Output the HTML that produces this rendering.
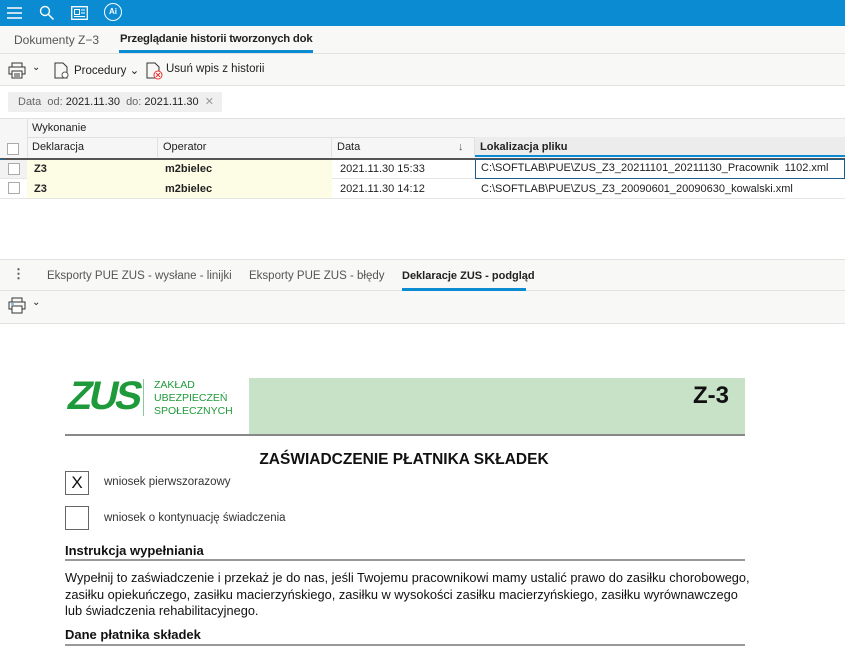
<!DOCTYPE html>
<html><head><meta charset="utf-8"><style>
*{box-sizing:border-box;margin:0;padding:0}
body{width:845px;height:650px;overflow:hidden;background:#fff;font-family:"Liberation Sans",sans-serif;color:#222;position:relative;font-size:12px}
.a{position:absolute}
.top{left:0;top:0;width:845px;height:26px;background:#0a8bd2}
.tabs{left:0;top:26px;width:845px;height:28px;background:#f8f8f7;border-bottom:1px solid #e2e2e2}
.tb{left:0;top:54px;width:845px;height:32px;background:#f8f8f7;border-bottom:1px solid #e2e2e2}
.gray{color:#555}
.cell{position:absolute;height:20px;line-height:20px;font-size:11px;padding-left:5px;white-space:nowrap;overflow:hidden}
.cb{position:absolute;width:12px;height:12px;border:1px solid #aaa;background:#fff}
.doc{font-family:"Liberation Sans",sans-serif;color:#111}
</style></head><body>
<div class="a top">
 <svg class="a" style="left:7px;top:7px" width="16" height="12"><path d="M0 1h15M0 6h15M0 11h15" stroke="#fff" stroke-width="1.5"/></svg>
 <svg class="a" style="left:39px;top:5px" width="16" height="16"><circle cx="6" cy="6" r="4.5" stroke="#fff" stroke-width="1.4" fill="none"/><path d="M9.5 9.5l5 5" stroke="#fff" stroke-width="1.5"/></svg>
 <svg class="a" style="left:71px;top:6px" width="18" height="14"><rect x="0.7" y="0.7" width="15.6" height="12.6" fill="none" stroke="#fff" stroke-width="1.3"/><rect x="3.5" y="3.5" width="5" height="5" fill="none" stroke="#fff"/><path d="M10 4h4M10 7h4M3 10.5h11" stroke="#fff"/></svg>
 <div class="a" style="left:104px;top:3px;width:18px;height:18px;border:1.3px solid #fff;border-radius:50%;color:#fff;font-size:8px;font-weight:bold;text-align:center;line-height:16px">Ai</div>
</div>
<div class="a tabs">
 <div class="a gray" style="left:14px;top:7px;font-size:12px">Dokumenty Z−3</div>
 <div class="a" style="left:120px;top:7px;font-size:11.3px;font-weight:bold;color:#222;width:193px;overflow:hidden;white-space:nowrap;letter-spacing:-0.2px">Przeglądanie historii tworzonych dok<span style="color:#bbb">u</span></div>
 <div class="a" style="left:119px;top:24px;width:194px;height:3px;background:#0a8bd2"></div>
</div>
<div class="a tb">
 <svg class="a" style="left:8px;top:8px" width="18" height="17"><rect x="4" y="1" width="10" height="4" fill="none" stroke="#333"/><rect x="1" y="5" width="16" height="7" fill="none" stroke="#333"/><rect x="4" y="9" width="10" height="7" fill="#fff" stroke="#333"/><path d="M6 12h6M6 14h6" stroke="#333"/></svg>
 <div class="a" style="left:32px;top:8px;font-size:10px">⌄</div>
 <svg class="a" style="left:54px;top:8px" width="16" height="18"><path d="M1 1h8l4 4v11H1z" fill="none" stroke="#333"/><circle cx="11" cy="13" r="3" fill="#fff" stroke="#555"/></svg>
 <div class="a" style="left:74px;top:9px;font-size:11.5px">Procedury ⌄</div>
 <svg class="a" style="left:146px;top:8px" width="18" height="18"><path d="M1 1h8l4 4v11H1z" fill="none" stroke="#333"/><circle cx="12" cy="13" r="4" fill="#fff" stroke="#e33"/><path d="M10 11l4 4M14 11l-4 4" stroke="#e33"/></svg>
 <div class="a" style="left:166px;top:9px;font-size:11.5px">Usuń wpis z historii</div>
</div>
<div class="a" style="left:8px;top:92px;width:214px;height:20px;background:#efefef;border-radius:2px;font-size:11px;line-height:20px;padding-left:10px;color:#666">Data&nbsp; od: <span style="color:#222">2021.11.30</span>&nbsp; do: <span style="color:#222">2021.11.30</span>&nbsp; <span style="color:#999">✕</span></div>
<div class="a" style="left:0;top:118px;width:845px;height:41px;background:#f6f6f6;border-top:1px solid #e2e2e2"></div>
<div class="a" style="left:27px;top:118px;width:1px;height:41px;background:#e0e0e0"></div>
<div class="a" style="left:27px;top:137px;width:818px;height:1px;background:#e0e0e0"></div>
<div class="cell" style="left:27px;top:118px">Wykonanie</div>
<div class="cb" style="left:7px;top:143px"></div>
<div class="cell" style="left:27px;top:137px;width:131px;border-right:1px solid #e0e0e0">Deklaracja</div>
<div class="cell" style="left:158px;top:137px;width:174px;border-right:1px solid #e0e0e0">Operator</div>
<div class="cell" style="left:332px;top:137px;width:143px;border-right:1px solid #e0e0e0">Data<span style="position:absolute;left:126px;color:#555">↓</span></div>
<div class="cell" style="left:475px;top:137px;width:370px;background:#ececec;font-weight:bold;border-bottom:2px solid #0a8bd2">Lokalizacja pliku</div>
<div class="a" style="left:0;top:158px;width:845px;height:2px;background:#555"></div>
<div class="a" style="left:0;top:159px;width:3px;height:19px;background:#0a6fb0"></div>
<div class="a" style="left:0;top:178px;width:845px;height:1px;background:#e6e6e6"></div>
<div class="a" style="left:0;top:198px;width:845px;height:1px;background:#e6e6e6"></div>
<div class="a" style="left:27px;top:160px;width:305px;height:38px;background:#fdfde6"></div>
<div class="a" style="left:0;top:160px;width:27px;height:18px;background:#f2f2f2"></div>
<div class="cb" style="left:8px;top:163px"></div><div class="cb" style="left:8px;top:182px"></div>
<div class="cell" style="left:29px;top:159px;font-weight:bold">Z3</div>
<div class="cell" style="left:160px;top:159px;font-weight:bold">m2bielec</div>
<div class="cell" style="left:335px;top:159px">2021.11.30 15:33</div>
<div class="cell" style="left:475px;top:159px;width:370px;height:20px;border:1.5px solid #1a5c8a;line-height:17px">C:\SOFTLAB\PUE\ZUS_Z3_20211101_20211130_Pracownik&nbsp; 1102.xml</div>
<div class="cell" style="left:29px;top:179px;font-weight:bold">Z3</div>
<div class="cell" style="left:160px;top:179px;font-weight:bold">m2bielec</div>
<div class="cell" style="left:335px;top:179px">2021.11.30 14:12</div>
<div class="cell" style="left:476px;top:179px">C:\SOFTLAB\PUE\ZUS_Z3_20090601_20090630_kowalski.xml</div>
<div class="a" style="left:0;top:259px;width:845px;height:32px;background:#f8f8f7;border-top:1px solid #e2e2e2;border-bottom:1px solid #e2e2e2">
 <div class="a" style="left:12px;top:6px;font-size:13px;font-weight:bold;color:#555">⋮</div>
 <div class="a gray" style="left:47px;top:10px;font-size:11.5px">Eksporty PUE ZUS - wysłane - linijki</div>
 <div class="a gray" style="left:249px;top:10px;font-size:11.5px">Eksporty PUE ZUS - błędy</div>
 <div class="a" style="left:402px;top:10px;font-size:11px;font-weight:bold">Deklaracje ZUS - podgląd</div>
 <div class="a" style="left:402px;top:28px;width:124px;height:3px;background:#0a8bd2"></div>
</div>
<div class="a" style="left:0;top:291px;width:845px;height:33px;background:#f8f8f7;border-bottom:1px solid #e2e2e2">
 <svg class="a" style="left:8px;top:6px" width="18" height="17"><rect x="4" y="1" width="10" height="4" fill="none" stroke="#333"/><rect x="1" y="5" width="16" height="7" fill="none" stroke="#333"/><rect x="4" y="9" width="10" height="7" fill="#fff" stroke="#333"/><path d="M3 7h3" stroke="#0a8bd2"/></svg>
 <div class="a" style="left:32px;top:6px;font-size:10px">⌄</div>
</div>
<div class="doc">
 <div class="a" style="left:64px;top:375px;font-size:40px;font-weight:bold;color:#1f9a3a;letter-spacing:-3px;line-height:42px;transform:skewX(-12deg) scaleX(1.0);transform-origin:left bottom">ZUS</div>
 <div class="a" style="left:143px;top:379px;width:1px;height:37px;background:#8cc89a"></div>
 <div class="a" style="left:154px;top:379px;font-size:10.5px;line-height:13px;color:#1f9a3a">ZAKŁAD<br>UBEZPIECZEŃ<br>SPOŁECZNYCH</div>
 <div class="a" style="left:249px;top:378px;width:496px;height:57px;background:#c8e2c8"></div>
 <div class="a" style="left:693px;top:382px;font-size:24px;font-weight:bold">Z-3</div>
 <div class="a" style="left:65px;top:434px;width:680px;height:2px;background:#888"></div>
 <div class="a" style="left:0;top:451px;width:808px;text-align:center;font-size:15.5px;font-weight:bold">ZAŚWIADCZENIE PŁATNIKA SKŁADEK</div>
 <div class="a" style="left:65px;top:471px;width:24px;height:24px;border:1px solid #666;text-align:center;font-size:17px;line-height:22px">X</div>
 <div class="a" style="left:104px;top:476px;font-size:11.5px;color:#333">wniosek pierwszorazowy</div>
 <div class="a" style="left:65px;top:506px;width:24px;height:24px;border:1px solid #666"></div>
 <div class="a" style="left:104px;top:512px;font-size:11.5px;color:#333">wniosek o kontynuację świadczenia</div>
 <div class="a" style="left:65px;top:543px;font-size:13px;font-weight:bold">Instrukcja wypełniania</div>
 <div class="a" style="left:65px;top:559px;width:680px;height:1.5px;background:#999"></div>
 <div class="a" style="left:65px;top:570px;width:720px;font-size:12.8px;line-height:16.5px;white-space:nowrap">Wypełnij to zaświadczenie i przekaż je do nas, jeśli Twojemu pracownikowi mamy ustalić prawo do zasiłku chorobowego,<br>zasiłku opiekuńczego, zasiłku macierzyńskiego, zasiłku w wysokości zasiłku macierzyńskiego, zasiłku wyrównawczego<br>lub świadczenia rehabilitacyjnego.</div>
 <div class="a" style="left:65px;top:627px;font-size:13px;font-weight:bold">Dane płatnika składek</div>
 <div class="a" style="left:65px;top:644px;width:680px;height:1.5px;background:#999"></div>
</div>
</body></html>
